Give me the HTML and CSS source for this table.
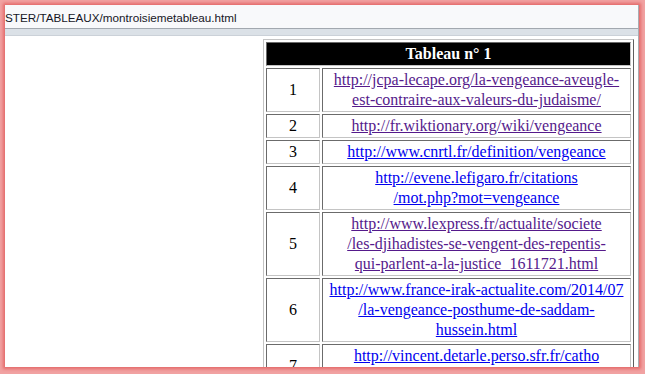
FILE: index.html
```html
<!DOCTYPE html>
<html lang="fr">
<head>
<meta charset="utf-8">
<title>montroisiemetableau</title>
<link rel="stylesheet" href="styles.css">
</head>
<body>
<div class="window">
  <div class="addressbar"><span class="url">STER/TABLEAUX/montroisiemetableau.html</span></div>
  <div class="toolbar"></div>
  <div class="content">
    <table class="links">
      <tr><th colspan="2">Tableau n° 1</th></tr>
      <tr><td class="num">1</td><td class="link"><a class="visited" href="#">http://jcpa-lecape.org/la-vengeance-aveugle-<br>est-contraire-aux-valeurs-du-judaisme/</a></td></tr>
      <tr><td class="num">2</td><td class="link"><a class="visited" href="#">http://fr.wiktionary.org/wiki/vengeance</a></td></tr>
      <tr><td class="num">3</td><td class="link"><a href="#">http://www.cnrtl.fr/definition/vengeance</a></td></tr>
      <tr><td class="num">4</td><td class="link"><a href="#">http://evene.lefigaro.fr/citations<br>/mot.php?mot=vengeance</a></td></tr>
      <tr><td class="num">5</td><td class="link"><a class="visited" href="#">http://www.lexpress.fr/actualite/societe<br>/les-djihadistes-se-vengent-des-repentis-<br>qui-parlent-a-la-justice_1611721.html</a></td></tr>
      <tr><td class="num">6</td><td class="link"><a href="#">http://www.france-irak-actualite.com/2014/07<br>/la-vengeance-posthume-de-saddam-<br>hussein.html</a></td></tr>
      <tr><td class="num">7</td><td class="link"><a href="#">http://vincent.detarle.perso.sfr.fr/catho<br>/vengeance.html</a></td></tr>
    </table>
  </div>
</div>
</body>
</html>
```
FILE: styles.css
```css
html, body {
  margin: 0;
  padding: 0;
  width: 645px;
  height: 374px;
  overflow: hidden;
}
body {
  background: #f1a2a2;
}
.window {
  margin: 5px 0 0 5px;
  width: 633px;
  height: 362px;
  background: #ffffff;
  border-right: 1px solid #a9adb3;
  box-shadow: 0 0 3px 2px #e46a6a;
  display: flex;
  flex-direction: column;
  overflow: hidden;
}
.addressbar {
  height: 23px;
  flex: none;
  background: #f8f9fb;
  border-bottom: 1px solid #a2a8af;
  display: flex;
  align-items: center;
  font-family: "Liberation Sans", Arial, sans-serif;
  font-size: 11.7px;
  color: #161626;
  white-space: nowrap;
}
.url {
  padding-top: 1px;
}
.toolbar {
  height: 6px;
  flex: none;
  background: #dbe1e7;
  border-bottom: 1px solid #cbd1d8;
}
.content {
  flex: 1;
  display: flex;
  justify-content: flex-end;
  align-items: flex-start;
  padding: 3px 4px 0 0;
}
.links {
  border-collapse: separate;
  border-spacing: 2px;
  border: 1px solid;
  border-color: #c4c4c4 #5e5e5e #5e5e5e #c4c4c4;
  font-family: "Liberation Serif", "Times New Roman", serif;
  font-size: 16px;
  line-height: 20px;
  color: #000;
}
.links th,
.links td {
  padding: 1px;
  border: 1px solid;
  border-color: #6b6b6b #c4c4c4 #c4c4c4 #6b6b6b;
  text-align: center;
  vertical-align: middle;
}
.links th {
  background: #000;
  color: #fff;
  font-weight: bold;
}
.num {
  width: 50px;
}
.link {
  width: 305px;
  white-space: nowrap;
}
.link a {
  color: #0000ee;
  text-decoration: underline;
}
.link a.visited {
  color: #551a8b;
}
```
